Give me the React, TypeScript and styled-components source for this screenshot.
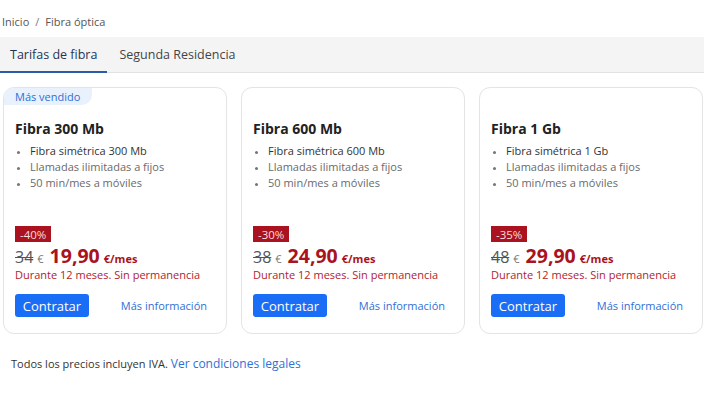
import styled, { createGlobalStyle } from "styled-components";

const GlobalStyle = createGlobalStyle`
  * { box-sizing: border-box; }
  html, body { overflow: hidden; }
  body {
    margin: 0;
    background: #fff;
    font-family: "Open Sans", "Liberation Sans", Arial, sans-serif;
    color: #222;
  }
`;

type Plan = {
  name: string;
  speed: string;
  discount: string;
  oldPrice: string;
  price: string;
  badge?: string;
};

const plans: Plan[] = [
  { name: "Fibra 300 Mb", speed: "300 Mb", discount: "-40%", oldPrice: "34", price: "19,90", badge: "Más vendido" },
  { name: "Fibra 600 Mb", speed: "600 Mb", discount: "-30%", oldPrice: "38", price: "24,90" },
  { name: "Fibra 1 Gb", speed: "1 Gb", discount: "-35%", oldPrice: "48", price: "29,90" },
];

function App() {
  return (
    <Page>
      <GlobalStyle />
      <Breadcrumb>
        <span>Inicio</span>
        <Sep>/</Sep>
        <span>Fibra óptica</span>
      </Breadcrumb>
      <Tabs>
        <Tab active>Tarifas de fibra</Tab>
        <Tab>Segunda Residencia</Tab>
      </Tabs>
      <Cards>
        {plans.map((p) => (
          <Card key={p.name}>
            {p.badge ? <Badge>{p.badge}</Badge> : <BadgeSpace />}
            <Title>{p.name}</Title>
            <Features>
              <Feature strong>Fibra simétrica {p.speed}</Feature>
              <Feature>Llamadas ilimitadas a fijos</Feature>
              <Feature>50 min/mes a móviles</Feature>
            </Features>
            <PriceBlock>
              <Discount>{p.discount}</Discount>
              <PriceRow>
                <OldPrice>{p.oldPrice}</OldPrice>
                <OldEuro>€</OldEuro>
                <Price>{p.price}</Price>
                <PerMonth>€/mes</PerMonth>
              </PriceRow>
              <Terms>Durante 12 meses. Sin permanencia</Terms>
              <Actions>
                <Button>Contratar</Button>
                <MoreLink>Más información</MoreLink>
              </Actions>
            </PriceBlock>
          </Card>
        ))}
      </Cards>
      <Footer>
        Todos los precios incluyen IVA. <FooterLink>Ver condiciones legales</FooterLink>
      </Footer>
    </Page>
  );
}

const Page = styled.div`
  width: 100%;
  height: 396px;
  overflow: hidden;
`;

const Breadcrumb = styled.div`
  display: flex;
  align-items: center;
  height: 37px;
  padding: 6px 0 0 2px;
  font-size: 11px;
  color: #555;
`;

const Sep = styled.span`
  margin: 0 6px;
  color: #777;
`;

const Tabs = styled.div`
  display: flex;
  height: 36px;
  background: #f4f4f4;
  border-bottom: 1px solid #e2e2e2;
`;

const Tab = styled.div<{ active?: boolean }>`
  display: flex;
  align-items: center;
  white-space: nowrap;
  padding: 0 ${(p) => (p.active ? "10px" : "12px")};
  font-size: 12.5px;
  min-width: ${(p) => (p.active ? "106px" : "0")};
  color: ${(p) => (p.active ? "#1d3557" : "#444")};
  border-bottom: 2px solid ${(p) => (p.active ? "#2b5cab" : "transparent")};
  margin-bottom: -1px;
`;

const Cards = styled.div`
  display: grid;
  grid-template-columns: repeat(3, 224px);
  gap: 14px;
  padding: 14px 0 0 3px;
`;

const Card = styled.div`
  height: 247px;
  border: 1px solid #e4e4e4;
  border-radius: 11px;
  display: flex;
  flex-direction: column;
  overflow: hidden;
  background: #fff;
`;

const Badge = styled.div`
  align-self: flex-start;
  height: 17px;
  padding: 0 12px 0 11px;
  display: flex;
  align-items: center;
  font-size: 11px;
  color: #2f6fd6;
  background: #e9f2fc;
  border-bottom-right-radius: 10px;
`;

const BadgeSpace = styled.div`
  height: 17px;
`;

const Title = styled.h3`
  margin: 14px 0 0 11px;
  font-size: 14px;
  line-height: 19px;
  font-weight: 700;
  color: #222;
`;

const Features = styled.ul`
  margin: 5px 0 0 0;
  padding: 0 0 0 26px;
  list-style: disc;
`;

const Feature = styled.li<{ strong?: boolean }>`
  font-size: 11px;
  line-height: 16px;
  color: ${(p) => (p.strong ? "#333" : "#6a6a6a")};
  &::marker {
    color: #777;
    font-size: 9px;
  }
`;

const PriceBlock = styled.div`
  margin-top: auto;
  padding: 0 11px 16px 11px;
  display: flex;
  flex-direction: column;
`;

const Discount = styled.div`
  align-self: flex-start;
  height: 16px;
  padding: 0 5px;
  display: flex;
  align-items: center;
  background: #a9121e;
  color: #f6dede;
  font-size: 11.5px;
`;

const PriceRow = styled.div`
  display: flex;
  align-items: baseline;
  height: 24px;
`;

const OldPrice = styled.span`
  font-size: 16px;
  color: #555;
  text-decoration: line-through;
  text-decoration-thickness: 1px;
`;

const OldEuro = styled.span`
  font-size: 11px;
  color: #777;
  margin: 0 6px 0 4px;
`;

const Price = styled.span`
  font-size: 19.5px;
  font-weight: 700;
  color: #a9121e;
`;

const PerMonth = styled.span`
  font-size: 11px;
  font-weight: 700;
  color: #a9121e;
  margin-left: 4px;
`;

const Terms = styled.div`
  font-size: 11px;
  line-height: 15px;
  color: #b3222e;
  margin-top: 1px;
`;

const Actions = styled.div`
  display: flex;
  align-items: center;
  justify-content: space-between;
  margin-top: 12px;
  padding-right: 8px;
`;

const Button = styled.button`
  height: 23px;
  width: 74px;
  border: none;
  border-radius: 3px;
  background: #1a6ef5;
  color: #fff;
  font-family: inherit;
  font-size: 13px;
  padding: 0;
`;

const MoreLink = styled.a`
  font-size: 11px;
  color: #2f6fd6;
`;

const Footer = styled.div`
  margin: 21px 0 0 11px;
  font-size: 11px;
  color: #333;
`;

const FooterLink = styled.a`
  font-size: 12px;
  color: #2f6fd6;
`;

export default App;
